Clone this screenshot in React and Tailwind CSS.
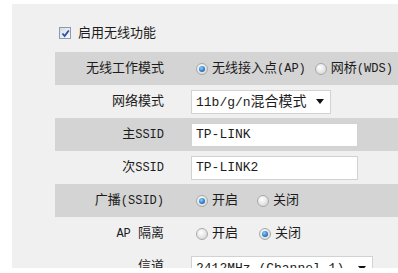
const font = "font-['Liberation_Mono','Noto_Sans_CJK_SC',monospace]";

function Radio({ checked }) {
  return (
    <span className="inline-flex h-[12px] w-[12px] shrink-0 items-center justify-center rounded-full border border-[#a9a9a9] bg-[radial-gradient(circle_at_40%_35%,#ffffff,#e2e2e2_60%,#cfcfcf)]">
      {checked && (
        <span className="h-[6px] w-[6px] rounded-full bg-[radial-gradient(circle_at_40%_35%,#8fd0ff,#2f7fc8_55%,#154f8c)]" />
      )}
    </span>
  );
}

function Latin({ children }) {
  return <span className="text-[12px]">{children}</span>;
}

function Row({ label, gray, top, children }) {
  return (
    <div
      className={`flex h-[33px] ${top ? 'items-start pt-[6px]' : 'items-center'} ${gray ? 'bg-[#d4d4d4]' : ''}`}
    >
      <div className={`w-[109px] shrink-0 whitespace-nowrap text-right ${top ? 'mt-[4px]' : ''}`}>{label}</div>
      <div className="flex items-center pl-[27px] whitespace-nowrap">{children}</div>
    </div>
  );
}

function Option({ checked, children, className = '' }) {
  return (
    <span className={`flex items-center ${className}`}>
      <Radio checked={checked} />
      <span className="ml-[4px]">{children}</span>
    </span>
  );
}

function Box({ width, children, arrow }) {
  return (
    <div
      className={`flex h-[24px] items-center justify-between border border-[#d2d2d2] bg-white pl-[4px] pr-[6px] ${width}`}
    >
      <span>{children}</span>
      {arrow && (
        <svg width="8" height="5" viewBox="0 0 8 5" className="shrink-0">
          <path d="M0 0h8L4 5z" fill="#111" />
        </svg>
      )}
    </div>
  );
}

export default function App() {
  return (
    <div className={`h-[273px] w-[398px] overflow-hidden bg-white pl-3 pt-1 text-[13px] leading-none text-[#1c1c1c] ${font}`}>
      <div className="h-[264px] overflow-hidden bg-[#f0f0f0]">
        <div className="mt-[18px] flex h-[22px] items-center gap-[7px] pl-[47px]">
          <span className="flex h-[12px] w-[12px] items-center justify-center border border-[#8d9bb0] bg-[linear-gradient(135deg,#d6dce6,#f8f9fb)]">
            <svg width="9" height="9" viewBox="0 0 9 9">
              <path d="M1.5 4.5 L3.6 7 L7.8 1.5" fill="none" stroke="#2d4fa8" strokeWidth="1.8" />
            </svg>
          </span>
          <span>启用无线功能</span>
        </div>

        <div className="mt-2 pl-[43px]">
          <Row label="无线工作模式" gray>
            <Option checked className="ml-[5px]">
              无线接入点<Latin>(AP)</Latin>
            </Option>
            <Option className="ml-[9px]">
              网桥<Latin>(WDS)</Latin>
            </Option>
          </Row>
          <Row label="网络模式">
            <Box width="w-[140px]" arrow>
              11b/g/n<span className="text-[14px]">混合模式</span>
            </Box>
          </Row>
          <Row label={<>主<Latin>SSID</Latin></>} gray>
            <Box width="w-[167px]">TP-LINK</Box>
          </Row>
          <Row label={<>次<Latin>SSID</Latin></>}>
            <Box width="w-[167px]">TP-LINK2</Box>
          </Row>
          <Row label={<>广播<Latin>(SSID)</Latin></>} gray>
            <Option checked className="ml-[5px]">开启</Option>
            <Option className="ml-[19px]">关闭</Option>
          </Row>
          <Row label={<><Latin>AP </Latin>隔离</>}>
            <Option className="ml-[5px]">开启</Option>
            <Option checked className="ml-[21px]">关闭</Option>
          </Row>
          <Row label="信道" top>
            <Box width="w-[182px]" arrow>2412MHz (Channel 1)</Box>
          </Row>
        </div>
      </div>
    </div>
  );
}
